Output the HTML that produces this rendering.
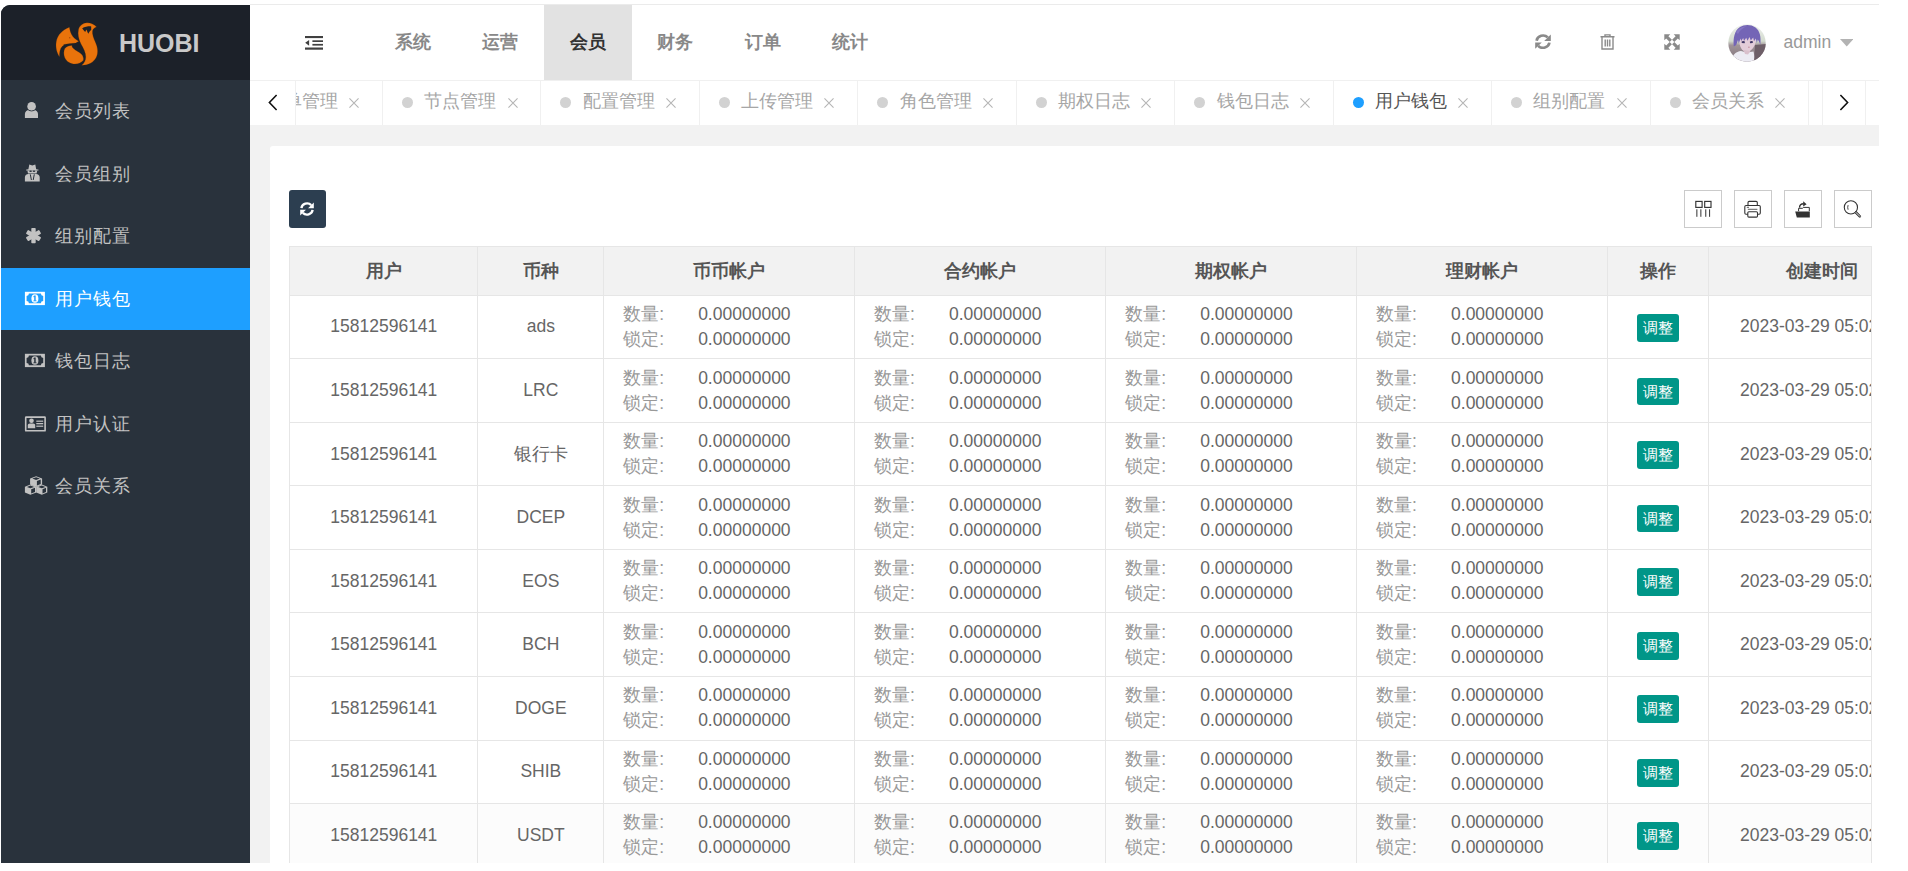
<!DOCTYPE html>
<html><head><meta charset="utf-8"><title>HUOBI</title>
<style>
*{box-sizing:border-box;margin:0;padding:0}
html,body{width:1908px;height:871px;overflow:hidden;background:#fff}
body{font-family:"Liberation Sans",sans-serif;font-size:17.5px;color:#666;position:relative}
.abs{position:absolute}
#app{position:absolute;left:1px;top:5px;width:1878px;height:858px;overflow:hidden;border-top-left-radius:9px;background:#f2f2f2}
#topline{position:absolute;left:250px;top:4px;width:1629px;height:1px;background:#ebebeb}
#side{position:absolute;left:0;top:0;width:249px;height:858px;background:#29323c}
#logo{position:absolute;left:0;top:0;width:249px;height:75px;background:#1c2129}
#logo .t{position:absolute;left:118px;top:23px;font-weight:bold;font-size:25px;color:#c9c9c9;line-height:30px;letter-spacing:0px}
.mi{position:absolute;left:0;width:249px;height:62.5px;color:#c2c2c2;}
.mi.on{background:#1e9fff;color:#fff}
.mi .ic{position:absolute;left:24.5px;top:0;width:30px;height:62.5px;display:flex;align-items:center;justify-content:flex-start}
.mi .tx{position:absolute;left:54.3px;top:0.3px;line-height:62.5px;font-size:18px;letter-spacing:0.75px}
#header{position:absolute;left:249px;top:0;width:1629px;height:75px;background:#fff}
.nav{position:absolute;top:0;height:75px;line-height:75px;font-size:17.5px;font-weight:bold;color:#888;text-align:center}
.nav.on{background:#e2e2e2;color:#333}
#tabs{position:absolute;left:249px;top:75px;width:1629px;height:45px;background:#fff;border-top:1px solid #f0f0f0}
.tab{position:absolute;top:0;height:44px;color:#a6a6a6;font-size:17.5px;line-height:44px;white-space:nowrap;overflow:hidden}
.tab .dot{position:absolute;left:20px;top:16px;width:11px;height:11px;border-radius:50%;background:#d2d2d2}
.tab .tx{position:absolute;left:42.4px;top:-1.7px}
.tab .x{position:absolute;left:125.5px;top:16.8px;width:10px;height:10px}
.tab.on{color:#555}
.tab.on .dot{background:#1e9fff}
#card{position:absolute;left:269px;top:140.5px;width:1640px;height:800px;background:#fff;border-radius:3px}
table{border-collapse:collapse;table-layout:fixed;position:absolute;left:19.3px;top:100.3px;width:1645.6px}
th,td{border:1px solid #e6e6e6;text-align:center;overflow:hidden;white-space:nowrap;padding:0}
th{background:#f2f2f2;height:48.9px;font-weight:bold;color:#555;font-size:17.5px}
td{height:63.55px;color:#666;font-size:17.5px}
.acc{text-align:left;padding-left:18.75px}
.acc .l{display:inline-block;width:75px;color:#999}
.acc div{line-height:25px;height:25px}
.btn{position:relative;top:1px;display:inline-block;background:#009688;color:#fff;font-size:15px;width:42px;height:27.7px;line-height:27.7px;border-radius:3px;text-align:center}
.tb{position:absolute;top:44.5px;width:38px;height:38px;border:1px solid #cbcbcb;}
</style></head><body>
<div id="topline"></div>
<div id="app">

<div id="side"><div id="logo">
<svg class="abs" style="left:53px;top:16px" width="46" height="46" viewBox="0 0 46 46"><g fill="#e9730b" stroke="#5a2a08" stroke-width="0.35" stroke-opacity="0.6">
<path d="M15.4 6.2 C9 8.5 3.5 13.5 2.3 20.5 C1.3 26.5 2.8 31.8 5.5 35.8 C5.2 32 6 27.5 8.3 25.2 L9.5 24.6 L9.8 23.6 C13.5 22.6 18.5 22.5 21.7 22.1 L24.7 20.3 C21.5 18.3 19 16.5 17.6 13.6 C16.6 11.5 15.8 9 15.4 6.2 Z"/>
<path d="M10.8 27.5 C9.6 30 9.5 33.5 10.7 36.5 C12.5 40.8 16.5 43 21 43 C24.5 43 27.5 41.5 29.4 39.3 C29.8 37 29 34.6 27.3 33 C25 30.8 21.5 29.5 19.5 27.5 C18.3 26.3 17.8 25.3 18.1 24.4 C15.5 24.3 12.5 25.2 10.8 27.5 Z"/>
<path d="M33 1.8 C29 2 25.5 4.5 24.5 8.5 C23.5 13 24.5 18 27 23 C29.5 27.5 31.8 31.5 31.8 36 C31.8 39.5 30 42.5 27.6 44.2 C33.5 44.5 39.5 41.8 42.2 36.5 C44.5 32 43.8 26.5 41.5 21.5 C39.8 17.5 38 13 38.5 10 C39 8 40.5 6.5 42.6 6 C40.5 3.5 37 1.8 33 1.8 Z"/>
</g><g fill="#1c2129"><path d="M28.2 7.2 C31 5.9 34.2 5.2 37.2 5.4 L37.2 8.9 L36 10.1 L34.2 12.8 L32.4 8.6 L31.2 11 L29.4 8.9 Z"/><circle cx="15.7" cy="16.7" r="0.75" fill="#b04a08"/></g></svg>
<div class="t">HUOBI</div></div>
<div class="mi" style="top:75.0px"><svg class="abs" style="left:0;top:0" width="60" height="62.5" viewBox="0 0 60 62.5"><circle cx="30.6" cy="26.4" r="4.3" fill="currentColor"/><path d="M23.9 38.1 V34 C23.9 31.6 25.6 29.9 28 29.9 H32.9 C35.3 29.9 37 31.6 37 34 V38.1 Z" fill="currentColor"/><path d="M27.5 30.3 Q30.6 31.6 33.7 30.3" stroke="#29323c" stroke-width="0.9" fill="none"/></svg><div class="tx">会员列表</div></div>
<div class="mi" style="top:137.5px"><svg class="abs" style="left:0;top:0" width="60" height="62.5" viewBox="0 0 60 62.5"><path d="M27.4 26.2 L28.3 21.6 L31.3 22.5 L34.3 21.6 L35.2 26.2 Z" fill="currentColor"/><path d="M24.9 26.8 Q31.3 24.6 37.7 26.8 L37.3 27.6 H25.3 Z" fill="currentColor"/><path d="M26.4 27.6 H36.2 L35.6 30.6 H27 Z" fill="currentColor"/><ellipse cx="29.6" cy="28.3" rx="1.35" ry="0.75" fill="#29323c"/><ellipse cx="33" cy="28.3" rx="1.35" ry="0.75" fill="#29323c"/><path d="M23.9 38.6 V34.6 C23.9 32.4 25.3 31.1 27.5 31.1 H35.1 C37.3 31.1 38.7 32.4 38.7 34.6 V38.6 Z" fill="currentColor"/><path d="M29.3 31.3 L30.4 37 M33.3 31.3 L32.2 37" stroke="#29323c" stroke-width="1"/></svg><div class="tx">会员组别</div></div>
<div class="mi" style="top:200.0px"><svg class="abs" style="left:0;top:0" width="60" height="62.5" viewBox="0 0 60 62.5"><g fill="currentColor"><rect x="30.3" y="22.9" width="4.4" height="15.3" rx="0.8"/><rect x="30.3" y="22.9" width="4.4" height="15.3" rx="0.8" transform="rotate(60 32.5 30.55)"/><rect x="30.3" y="22.9" width="4.4" height="15.3" rx="0.8" transform="rotate(-60 32.5 30.55)"/></g></svg><div class="tx">组别配置</div></div>
<div class="mi on" style="top:262.5px"><svg class="abs" style="left:0;top:0" width="60" height="62.5" viewBox="0 0 60 62.5"><rect x="23.9" y="23.8" width="20" height="13.3" fill="currentColor"/><path d="M27.9 25.6 H39.9 A2.3 2.3 0 0 0 42.2 27.9 V33 A2.3 2.3 0 0 0 39.9 35.3 H27.9 A2.3 2.3 0 0 0 25.6 33 V27.9 A2.3 2.3 0 0 0 27.9 25.6 Z" fill="#1e9fff"/><ellipse cx="33.9" cy="30.45" rx="3.5" ry="4.3" fill="currentColor"/><path d="M33.3 27.6 H34.7 V32.4 H35.6 V33.2 H32.3 V32.4 H33.2 V28.9 L32.4 29.3 V28.4 Z" fill="#1e9fff"/></svg><div class="tx">用户钱包</div></div>
<div class="mi" style="top:325.0px"><svg class="abs" style="left:0;top:0" width="60" height="62.5" viewBox="0 0 60 62.5"><rect x="23.9" y="23.8" width="20" height="13.3" fill="currentColor"/><path d="M27.9 25.6 H39.9 A2.3 2.3 0 0 0 42.2 27.9 V33 A2.3 2.3 0 0 0 39.9 35.3 H27.9 A2.3 2.3 0 0 0 25.6 33 V27.9 A2.3 2.3 0 0 0 27.9 25.6 Z" fill="#29323c"/><ellipse cx="33.9" cy="30.45" rx="3.5" ry="4.3" fill="currentColor"/><path d="M33.3 27.6 H34.7 V32.4 H35.6 V33.2 H32.3 V32.4 H33.2 V28.9 L32.4 29.3 V28.4 Z" fill="#29323c"/></svg><div class="tx">钱包日志</div></div>
<div class="mi" style="top:387.5px"><svg class="abs" style="left:0;top:0" width="60" height="62.5" viewBox="0 0 60 62.5"><path fill="currentColor" fill-rule="evenodd" d="M25.1 23.3 H43.7 A1.2 1.2 0 0 1 44.9 24.5 V37.4 A1.2 1.2 0 0 1 43.7 38.6 H25.1 A1.2 1.2 0 0 1 23.9 37.4 V24.5 A1.2 1.2 0 0 1 25.1 23.3 Z M25.5 24.9 V37 H43.3 V24.9 Z"/><circle cx="30.5" cy="27.8" r="2.3" fill="currentColor"/><path d="M26.8 35.2 V32.4 C26.8 31.2 27.6 30.5 28.8 30.5 H32.2 C33.4 30.5 34.2 31.2 34.2 32.4 V35.2 Z" fill="currentColor"/><rect x="35.3" y="27.6" width="6.9" height="1.2" fill="currentColor"/><rect x="35.3" y="30" width="6.9" height="1.3" fill="currentColor"/><rect x="35.3" y="32.6" width="6.9" height="1.2" fill="currentColor"/></svg><div class="tx">用户认证</div></div>
<div class="mi" style="top:450.0px"><svg class="abs" style="left:0;top:0" width="60" height="62.5" viewBox="0 0 60 62.5"><g fill="currentColor"><path d="M35.1 21.2 L41.1 23.4 V29.6 L35.1 32 L29.1 29.6 V23.4 Z"/><path d="M29.4 29.5 L35.4 31.8 V37.6 L29.4 39.8 L23.9 37.6 V31.8 Z"/><path d="M40.8 29.5 L46.3 31.8 V37.6 L40.8 39.8 L35.2 37.6 V31.8 Z"/></g><g fill="#29323c"><path d="M31.3 23.6 L35.1 22.3 L38.9 23.6 L35.1 25 Z"/><path d="M35.9 26 L39.7 24.6 V29 L35.9 30.4 Z"/><path d="M25.9 31.9 L29.4 30.6 L33.2 31.9 L29.4 33.3 Z"/><path d="M30.2 34.2 L34 32.8 V37 L30.2 38.4 Z"/><path d="M37.1 31.9 L40.8 30.6 L44.5 31.9 L40.8 33.3 Z"/><path d="M41.5 34.2 L45 32.8 V37 L41.5 38.4 Z"/></g></svg><div class="tx">会员关系</div></div>
</div>
<div id="header">
<svg class="abs" style="left:55px;top:30px" width="19" height="16" viewBox="0 0 19 16"><g fill="#404040"><rect x="0" y="1" width="18" height="2.1"/><rect x="7.4" y="5.3" width="10.6" height="1.7"/><rect x="7.4" y="8.9" width="10.6" height="1.7"/><rect x="0" y="12.5" width="18" height="2.2"/><path d="M0.2 7.8 L4.1 4.9 V10.8 Z"/></g></svg>
<div class="nav" style="left:119.0px;width:87.5px">系统</div>
<div class="nav" style="left:206.5px;width:87.5px">运营</div>
<div class="nav on" style="left:294.0px;width:87.5px">会员</div>
<div class="nav" style="left:381.5px;width:87.5px">财务</div>
<div class="nav" style="left:469.0px;width:87.5px">订单</div>
<div class="nav" style="left:556.5px;width:87.5px">统计</div>
<svg class="abs" style="left:1284.8px;top:28.8px" width="16" height="15.4" viewBox="0 0 16 16" preserveAspectRatio="none"><g fill="none" stroke="#8a8a8a" stroke-width="2.7"><path d="M1.6 7 A6.5 6.2 0 0 1 12.8 3.6"/><path d="M14.4 9 A6.5 6.2 0 0 1 3.2 12.4"/></g><g fill="#8a8a8a"><path d="M15.8 0.6 V7.2 H9.2 Z"/><path d="M0.2 15.4 V8.8 H6.8 Z"/></g></svg>
<svg class="abs" style="left:1350px;top:28.5px" width="15" height="16" viewBox="0 0 15 16"><g fill="none" stroke="#8a8a8a" stroke-width="1.4"><path d="M0.5 2.8 H14.5"/><path d="M5 2.6 V0.9 H10 V2.6"/><path d="M2 3 V15 H13 V3"/><path d="M5.2 5.6 V12.6 M7.5 5.6 V12.6 M9.8 5.6 V12.6"/></g></svg>
<svg class="abs" style="left:1414px;top:28.5px" width="16" height="16" viewBox="0 0 16 16"><g fill="#8a8a8a"><path d="M0.3 0.3 H6.3 L4.4 2.2 L7.9 5.7 L5.7 7.9 L2.2 4.4 L0.3 6.3 Z"/><path d="M15.7 0.3 V6.3 L13.8 4.4 L10.3 7.9 L8.1 5.7 L11.6 2.2 L9.7 0.3 Z"/><path d="M0.3 15.7 V9.7 L2.2 11.6 L5.7 8.1 L7.9 10.3 L4.4 13.8 L6.3 15.7 Z"/><path d="M15.7 15.7 H9.7 L11.6 13.8 L8.1 10.3 L10.3 8.1 L13.8 11.6 L15.7 9.7 Z"/></g></svg>
<svg class="abs" style="left:1478.3px;top:18.8px" width="38" height="38" viewBox="0 0 38 38"><defs><clipPath id="cav"><circle cx="19" cy="19" r="18.7"/></clipPath>
<linearGradient id="bgav" x1="0" y1="0" x2="0" y2="1"><stop offset="0" stop-color="#eef0ee"/><stop offset="0.45" stop-color="#d4dccf"/><stop offset="0.56" stop-color="#a09498"/><stop offset="1" stop-color="#7d6f78"/></linearGradient></defs>
<g clip-path="url(#cav)"><rect width="38" height="38" fill="url(#bgav)"/>
<path d="M27 21 L38 20 V38 H26 Z" fill="#6e5f68"/>
<path d="M3 38 C4 31 8 27.5 13 27 L19 28.5 L25.5 27.5 C26.5 31 26.5 35 25.5 38 Z" fill="#ecebf3"/>
<path d="M11.2 13 C11 20 12.5 25.5 16.5 27.5 C18.5 28.3 20.5 28 22.5 26.5 C26.5 23.5 28.2 18.5 28 12.5 Z" fill="#e3cdd9"/>
<path d="M15.5 26 L17 30 L20 30.5 L22.5 27 Z" fill="#d9c0cc"/>
<path d="M5.8 22.5 C5 14 6.5 6.5 12 3 C16.5 0.2 23 0.3 27.5 3.5 C32 7 33.2 13 32.3 20.5 C31.5 18.5 30.8 16.8 29.8 15.5 L28.8 19 L27.8 14.6 L26 17.2 L25.2 13.6 L22.8 16.6 L21.5 13 L19.5 16.8 L18.2 13.8 L16 17 L15.2 14 L13.2 17 L12.5 14.5 L10.8 19.5 L10 16 L8.2 21 Z" fill="#7465b6"/>
<path d="M8 8 C11 4 15 2.5 19 2.3 C15 4 12 6 10 10 Z" fill="#8577c4"/>
<path d="M13.6 17.6 C14.6 16.9 16.2 16.9 17 17.8 L16.6 19.2 L13.8 19 Z M21.8 17.8 C22.6 16.9 24.3 16.9 25 17.6 L24.7 19 L22.1 19.2 Z" fill="#3f3766"/>
<path d="M20.2 23.2 h1.4" stroke="#b07080" stroke-width="0.8"/>
</g></svg>
<div class="abs" style="left:1533.5px;top:26px;line-height:22px;color:#999;font-size:17.5px">admin</div>
<svg class="abs" style="left:1589.5px;top:34px" width="13.5" height="7.5" viewBox="0 0 13.5 7.5"><path d="M0 0 H13.5 L6.75 7.5 Z" fill="#b3b3b3"/></svg>
</div>
<div id="tabs">
<svg class="abs" style="left:17.8px;top:12.6px" width="10" height="17" viewBox="0 0 10 17"><path d="M8.6 1 L1.4 8.5 L8.6 16" fill="none" stroke="#111" stroke-width="1.6"/></svg>
<div class="abs" style="left:45px;top:0;width:1px;height:44px;background:#f0f0f0"></div>
<div class="abs" style="left:46px;top:0;width:1513px;height:44px;overflow:hidden">
<div class="tab" style="left:-72.44px;width:158.44px"><span class="dot"></span><span class="tx">菜单管理</span><svg class="x" viewBox="0 0 11 11"><path d="M0.5 0.5 L10.5 10.5 M10.5 0.5 L0.5 10.5" stroke="#b5b5b5" stroke-width="1.2"/></svg></div>
<div class="tab" style="left:86.00px;width:158.44px"><span class="dot"></span><span class="tx">节点管理</span><svg class="x" viewBox="0 0 11 11"><path d="M0.5 0.5 L10.5 10.5 M10.5 0.5 L0.5 10.5" stroke="#b5b5b5" stroke-width="1.2"/></svg></div>
<div class="tab" style="left:244.44px;width:158.44px"><span class="dot"></span><span class="tx">配置管理</span><svg class="x" viewBox="0 0 11 11"><path d="M0.5 0.5 L10.5 10.5 M10.5 0.5 L0.5 10.5" stroke="#b5b5b5" stroke-width="1.2"/></svg></div>
<div class="tab" style="left:402.88px;width:158.44px"><span class="dot"></span><span class="tx">上传管理</span><svg class="x" viewBox="0 0 11 11"><path d="M0.5 0.5 L10.5 10.5 M10.5 0.5 L0.5 10.5" stroke="#b5b5b5" stroke-width="1.2"/></svg></div>
<div class="tab" style="left:561.32px;width:158.44px"><span class="dot"></span><span class="tx">角色管理</span><svg class="x" viewBox="0 0 11 11"><path d="M0.5 0.5 L10.5 10.5 M10.5 0.5 L0.5 10.5" stroke="#b5b5b5" stroke-width="1.2"/></svg></div>
<div class="tab" style="left:719.76px;width:158.44px"><span class="dot"></span><span class="tx">期权日志</span><svg class="x" viewBox="0 0 11 11"><path d="M0.5 0.5 L10.5 10.5 M10.5 0.5 L0.5 10.5" stroke="#b5b5b5" stroke-width="1.2"/></svg></div>
<div class="tab" style="left:878.20px;width:158.44px"><span class="dot"></span><span class="tx">钱包日志</span><svg class="x" viewBox="0 0 11 11"><path d="M0.5 0.5 L10.5 10.5 M10.5 0.5 L0.5 10.5" stroke="#b5b5b5" stroke-width="1.2"/></svg></div>
<div class="tab on" style="left:1036.64px;width:158.44px"><span class="dot"></span><span class="tx">用户钱包</span><svg class="x" viewBox="0 0 11 11"><path d="M0.5 0.5 L10.5 10.5 M10.5 0.5 L0.5 10.5" stroke="#b5b5b5" stroke-width="1.2"/></svg></div>
<div class="tab" style="left:1195.08px;width:158.44px"><span class="dot"></span><span class="tx">组别配置</span><svg class="x" viewBox="0 0 11 11"><path d="M0.5 0.5 L10.5 10.5 M10.5 0.5 L0.5 10.5" stroke="#b5b5b5" stroke-width="1.2"/></svg></div>
<div class="tab" style="left:1353.52px;width:158.44px"><span class="dot"></span><span class="tx">会员关系</span><svg class="x" viewBox="0 0 11 11"><path d="M0.5 0.5 L10.5 10.5 M10.5 0.5 L0.5 10.5" stroke="#b5b5b5" stroke-width="1.2"/></svg></div>
<div class="abs" style="left:86px;top:0;width:1px;height:44px;background:#f0f0f0"></div>
<div class="abs" style="left:244px;top:0;width:1px;height:44px;background:#f0f0f0"></div>
<div class="abs" style="left:403px;top:0;width:1px;height:44px;background:#f0f0f0"></div>
<div class="abs" style="left:561px;top:0;width:1px;height:44px;background:#f0f0f0"></div>
<div class="abs" style="left:720px;top:0;width:1px;height:44px;background:#f0f0f0"></div>
<div class="abs" style="left:878px;top:0;width:1px;height:44px;background:#f0f0f0"></div>
<div class="abs" style="left:1037px;top:0;width:1px;height:44px;background:#f0f0f0"></div>
<div class="abs" style="left:1195px;top:0;width:1px;height:44px;background:#f0f0f0"></div>
<div class="abs" style="left:1354px;top:0;width:1px;height:44px;background:#f0f0f0"></div>
<div class="abs" style="left:1512px;top:0;width:1px;height:44px;background:#f0f0f0"></div>
</div>
<div class="abs" style="left:1572px;top:0;width:1px;height:44px;background:#f0f0f0"></div>
<div class="abs" style="left:1615px;top:0;width:1px;height:44px;background:#f0f0f0"></div>
<svg class="abs" style="left:1588.8px;top:12.6px" width="10" height="17" viewBox="0 0 10 17"><path d="M1.4 1 L8.6 8.5 L1.4 16" fill="none" stroke="#111" stroke-width="1.6"/></svg>
</div>
<div id="card">
<div class="abs" style="left:18.9px;top:44.4px;width:37px;height:38px;background:#2c3e50;border-radius:3px"><svg class="abs" style="left:11.5px;top:12px" width="14" height="14" viewBox="0 0 16 16"><g fill="none" stroke="#fff" stroke-width="2.7"><path d="M1.6 7 A6.5 6.2 0 0 1 12.8 3.6"/><path d="M14.4 9 A6.5 6.2 0 0 1 3.2 12.4"/></g><g fill="#fff"><path d="M15.8 0.6 V7.2 H9.2 Z"/><path d="M0.2 15.4 V8.8 H6.8 Z"/></g></svg></div>
<div class="tb" style="left:1414.2px"><svg class="abs" style="left:-1px;top:-1px" width="38" height="38" viewBox="0 0 38 38"><g fill="none" stroke="#333" stroke-width="1.15"><rect x="11.8" y="11.4" width="6.3" height="6"/><rect x="20.7" y="11.4" width="6.3" height="6"/></g><g fill="#444"><rect x="12.3" y="19.3" width="1.1" height="7.5"/><rect x="16.3" y="19.3" width="1.1" height="7.5"/><rect x="21.2" y="19.3" width="1.1" height="7.5"/><rect x="25" y="19.3" width="1.1" height="7.5"/></g></svg></div>
<div class="tb" style="left:1464.2px"><svg class="abs" style="left:-1px;top:-1px" width="38" height="38" viewBox="0 0 38 38"><g fill="none" stroke="#333" stroke-width="1.1"><path d="M14 15 V12.6 Q14 11.4 15.2 11.4 H22.1 Q23.3 11.4 23.3 12.6 V15"/><path d="M13.8 24.2 H12 Q10.8 24.2 10.8 23 V16.7 Q10.8 15.5 12 15.5 H25.1 Q26.3 15.5 26.3 16.7 V23 Q26.3 24.2 25.1 24.2 H23.5"/><rect x="13.8" y="21.7" width="9.7" height="5.4" rx="1.1"/><path d="M13.8 19.3 H23.4" stroke-width="0.8"/><path d="M12.8 17.3 h2.2" stroke-width="0.8"/></g></svg></div>
<div class="tb" style="left:1514.2px"><svg class="abs" style="left:-1px;top:-1px" width="38" height="38" viewBox="0 0 38 38"><g fill="#333"><path d="M11.2 21.4 H25.8 V27.4 H12.8 Z"/></g><g fill="none" stroke="#333" stroke-width="1"><path d="M14.6 21.2 V18.3 H18.6 L19.4 17.4 H25.3 V21.2"/></g><path d="M15.6 17.6 C15.4 15 17 13.7 19.6 13.7" fill="none" stroke="#333" stroke-width="1.4"/><path d="M19.2 11.2 L22.6 14.2 L19.2 16.6 Z" fill="#333"/></svg></div>
<div class="tb" style="left:1564.3px"><svg class="abs" style="left:-1px;top:-1px" width="38" height="38" viewBox="0 0 38 38"><g fill="none" stroke="#333"><circle cx="16.9" cy="17.4" r="6.6" stroke-width="1.1"/><path d="M22 22.5 L25.8 26.3" stroke-width="2.6" stroke-linecap="round"/><path d="M22 22.5 L25.8 26.3" stroke="#fff" stroke-width="0.9" stroke-linecap="round"/><path d="M14.1 15.1 Q13.3 17.4 14.1 19.7" stroke-width="0.9"/></g></svg></div>
<table><colgroup><col style="width:188px"><col style="width:126.1px"><col style="width:250.8px"><col style="width:251.3px"><col style="width:250.8px"><col style="width:251.1px"><col style="width:101.1px"><col style="width:226.4px"></colgroup>
<tr><th>用户</th><th>币种</th><th>币币帐户</th><th>合约帐户</th><th>期权帐户</th><th>理财帐户</th><th>操作</th><th>创建时间</th></tr>
<tr><td>15812596141</td><td>ads</td><td class="acc"><div><span class="l">数量:</span>0.00000000</div><div><span class="l">锁定:</span>0.00000000</div></td><td class="acc"><div><span class="l">数量:</span>0.00000000</div><div><span class="l">锁定:</span>0.00000000</div></td><td class="acc"><div><span class="l">数量:</span>0.00000000</div><div><span class="l">锁定:</span>0.00000000</div></td><td class="acc"><div><span class="l">数量:</span>0.00000000</div><div><span class="l">锁定:</span>0.00000000</div></td><td><span class="btn">调整</span></td><td style="padding-right:1.6px">2023-03-29 05:02:23</td></tr>
<tr><td>15812596141</td><td>LRC</td><td class="acc"><div><span class="l">数量:</span>0.00000000</div><div><span class="l">锁定:</span>0.00000000</div></td><td class="acc"><div><span class="l">数量:</span>0.00000000</div><div><span class="l">锁定:</span>0.00000000</div></td><td class="acc"><div><span class="l">数量:</span>0.00000000</div><div><span class="l">锁定:</span>0.00000000</div></td><td class="acc"><div><span class="l">数量:</span>0.00000000</div><div><span class="l">锁定:</span>0.00000000</div></td><td><span class="btn">调整</span></td><td style="padding-right:1.6px">2023-03-29 05:02:23</td></tr>
<tr><td>15812596141</td><td>银行卡</td><td class="acc"><div><span class="l">数量:</span>0.00000000</div><div><span class="l">锁定:</span>0.00000000</div></td><td class="acc"><div><span class="l">数量:</span>0.00000000</div><div><span class="l">锁定:</span>0.00000000</div></td><td class="acc"><div><span class="l">数量:</span>0.00000000</div><div><span class="l">锁定:</span>0.00000000</div></td><td class="acc"><div><span class="l">数量:</span>0.00000000</div><div><span class="l">锁定:</span>0.00000000</div></td><td><span class="btn">调整</span></td><td style="padding-right:1.6px">2023-03-29 05:02:23</td></tr>
<tr><td>15812596141</td><td>DCEP</td><td class="acc"><div><span class="l">数量:</span>0.00000000</div><div><span class="l">锁定:</span>0.00000000</div></td><td class="acc"><div><span class="l">数量:</span>0.00000000</div><div><span class="l">锁定:</span>0.00000000</div></td><td class="acc"><div><span class="l">数量:</span>0.00000000</div><div><span class="l">锁定:</span>0.00000000</div></td><td class="acc"><div><span class="l">数量:</span>0.00000000</div><div><span class="l">锁定:</span>0.00000000</div></td><td><span class="btn">调整</span></td><td style="padding-right:1.6px">2023-03-29 05:02:23</td></tr>
<tr><td>15812596141</td><td>EOS</td><td class="acc"><div><span class="l">数量:</span>0.00000000</div><div><span class="l">锁定:</span>0.00000000</div></td><td class="acc"><div><span class="l">数量:</span>0.00000000</div><div><span class="l">锁定:</span>0.00000000</div></td><td class="acc"><div><span class="l">数量:</span>0.00000000</div><div><span class="l">锁定:</span>0.00000000</div></td><td class="acc"><div><span class="l">数量:</span>0.00000000</div><div><span class="l">锁定:</span>0.00000000</div></td><td><span class="btn">调整</span></td><td style="padding-right:1.6px">2023-03-29 05:02:23</td></tr>
<tr><td>15812596141</td><td>BCH</td><td class="acc"><div><span class="l">数量:</span>0.00000000</div><div><span class="l">锁定:</span>0.00000000</div></td><td class="acc"><div><span class="l">数量:</span>0.00000000</div><div><span class="l">锁定:</span>0.00000000</div></td><td class="acc"><div><span class="l">数量:</span>0.00000000</div><div><span class="l">锁定:</span>0.00000000</div></td><td class="acc"><div><span class="l">数量:</span>0.00000000</div><div><span class="l">锁定:</span>0.00000000</div></td><td><span class="btn">调整</span></td><td style="padding-right:1.6px">2023-03-29 05:02:23</td></tr>
<tr><td>15812596141</td><td>DOGE</td><td class="acc"><div><span class="l">数量:</span>0.00000000</div><div><span class="l">锁定:</span>0.00000000</div></td><td class="acc"><div><span class="l">数量:</span>0.00000000</div><div><span class="l">锁定:</span>0.00000000</div></td><td class="acc"><div><span class="l">数量:</span>0.00000000</div><div><span class="l">锁定:</span>0.00000000</div></td><td class="acc"><div><span class="l">数量:</span>0.00000000</div><div><span class="l">锁定:</span>0.00000000</div></td><td><span class="btn">调整</span></td><td style="padding-right:1.6px">2023-03-29 05:02:23</td></tr>
<tr><td>15812596141</td><td>SHIB</td><td class="acc"><div><span class="l">数量:</span>0.00000000</div><div><span class="l">锁定:</span>0.00000000</div></td><td class="acc"><div><span class="l">数量:</span>0.00000000</div><div><span class="l">锁定:</span>0.00000000</div></td><td class="acc"><div><span class="l">数量:</span>0.00000000</div><div><span class="l">锁定:</span>0.00000000</div></td><td class="acc"><div><span class="l">数量:</span>0.00000000</div><div><span class="l">锁定:</span>0.00000000</div></td><td><span class="btn">调整</span></td><td style="padding-right:1.6px">2023-03-29 05:02:23</td></tr>
<tr style="background:#fcfcfc"><td>15812596141</td><td>USDT</td><td class="acc"><div><span class="l">数量:</span>0.00000000</div><div><span class="l">锁定:</span>0.00000000</div></td><td class="acc"><div><span class="l">数量:</span>0.00000000</div><div><span class="l">锁定:</span>0.00000000</div></td><td class="acc"><div><span class="l">数量:</span>0.00000000</div><div><span class="l">锁定:</span>0.00000000</div></td><td class="acc"><div><span class="l">数量:</span>0.00000000</div><div><span class="l">锁定:</span>0.00000000</div></td><td><span class="btn">调整</span></td><td style="padding-right:1.6px">2023-03-29 05:02:23</td></tr>
</table>
<div class="abs" style="left:1601px;top:100px;width:40px;height:800px;background:#fff"></div><div class="abs" style="left:1601px;top:100.6px;width:1px;height:800px;background:#e6e6e6"></div>
</div>
</div>
<div class="abs" style="left:1879px;top:0;width:29px;height:871px;background:#fff"></div>
</body></html>
